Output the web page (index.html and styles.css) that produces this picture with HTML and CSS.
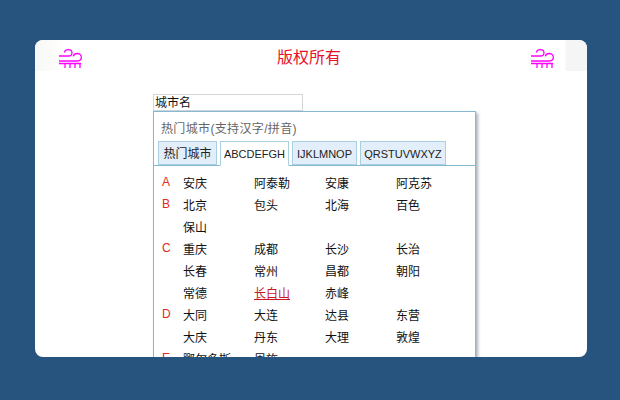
FILE: index.html
```html
<!DOCTYPE html>
<html lang="zh">
<head>
<meta charset="utf-8">
<title>版权所有</title>
<link rel="stylesheet" href="styles.css">
</head>
<body>
<main class="card">
  <header class="head">
    <svg class="wind" viewBox="0 0 24 20" aria-hidden="true"><path d="M1 8H10.500C12.600 8 14 6.800 14 5C14 3 12.500 1.600 10.300 1.600C8.300 1.600 6.700 2.800 6.200 4.500M1 13H19.500C21.800 13 23.300 11.500 23.300 9.300C23.300 7 21.500 5.500 19.300 5.500C17.500 5.500 15.800 6.500 15.300 8.300M1 15.500H23M7 16V20M12 16V20M17 16V20M22 16V20"/></svg>
    <h1 class="title">版权所有</h1>
    <svg class="wind" viewBox="0 0 24 20" aria-hidden="true"><path d="M1 8H10.500C12.600 8 14 6.800 14 5C14 3 12.500 1.600 10.300 1.600C8.300 1.600 6.700 2.800 6.200 4.500M1 13H19.500C21.800 13 23.300 11.500 23.300 9.300C23.300 7 21.500 5.500 19.300 5.500C17.500 5.500 15.800 6.500 15.300 8.300M1 15.500H23M7 16V20M12 16V20M17 16V20M22 16V20"/></svg>
  </header>
  <section class="picker">
    <input class="city-input" type="text" value="城市名" aria-label="城市名">
    <div class="popup">
      <p class="hint">热门城市(支持汉字/拼音)</p>
      <nav class="tabs">
        <span class="tab tab-hot">热门城市</span>
        <span class="tab tab-active">ABCDEFGH</span>
        <span class="tab tab-b">IJKLMNOP</span>
        <span class="tab tab-c">QRSTUVWXYZ</span>
      </nav>
      <div class="list">
        <div class="group"><b class="letter">A</b><ul class="cities"><li>安庆</li><li>阿泰勒</li><li>安康</li><li>阿克苏</li></ul></div>
        <div class="group"><b class="letter">B</b><ul class="cities"><li>北京</li><li>包头</li><li>北海</li><li>百色</li><li>保山</li></ul></div>
        <div class="group"><b class="letter">C</b><ul class="cities"><li>重庆</li><li>成都</li><li>长沙</li><li>长治</li><li>长春</li><li>常州</li><li>昌都</li><li>朝阳</li><li>常德</li><li class="current">长白山</li><li>赤峰</li></ul></div>
        <div class="group"><b class="letter">D</b><ul class="cities"><li>大同</li><li>大连</li><li>达县</li><li>东营</li><li>大庆</li><li>丹东</li><li>大理</li><li>敦煌</li></ul></div>
        <div class="group"><b class="letter">E</b><ul class="cities"><li>鄂尔多斯</li><li>恩施</li></ul></div>
      </div>
    </div>
  </section>
</main>
</body>
</html>
```
FILE: styles.css
```css
* { box-sizing: border-box; }
html, body { height: 100%; }
body {
  margin: 0;
  padding: 40px 33px 43px 35px;
  background: #27547f;
  font-family: "Liberation Sans", "Noto Sans CJK SC", sans-serif;
  font-size: 12px;
  overflow: hidden;
}
.card {
  height: 317px;
  background: #fff;
  border-radius: 8px;
  overflow: hidden;
}
.head {
  height: 54px;
  padding: 5px 33px 0 23px;
  display: flex;
  justify-content: space-between;
  align-items: flex-start;
  background: linear-gradient(90deg, #f7f7f5 0, #fff 30px, #fff 530px, #f5f5f5 531px);
  background-size: 100% 31px;
  background-repeat: no-repeat;
}
.wind {
  width: 24px;
  height: 20px;
  margin-top: 3px;
  fill: none;
  stroke: #f0f;
  stroke-width: 1.3;
}
.title {
  margin: 1px 0 0 6px;
  color: #e8102a;
  font-size: 16px;
  font-weight: 400;
  line-height: 24px;
}
.picker { margin-left: 118px; width: 323px; }
.city-input {
  display: block;
  width: 150px;
  height: 17px;
  padding: 0 1px 2px;
  border: 1px solid #d5d5d5;
  border-radius: 0;
  outline: 0;
  color: #111;
  font: 12px/14px "Liberation Sans", "Noto Sans CJK SC", sans-serif;
}
.popup {
  border: 1px solid #85b8d2;
  box-shadow: 2px 2px 3px #a9b4bd;
  background: #fff;
}
.hint {
  margin: 0;
  padding: 9px 0 0 7px;
  height: 29px;
  color: #666;
  font-size: 12px;
  line-height: 16px;
  letter-spacing: 0.35px;
}
.tabs {
  height: 25px;
  padding-left: 4px;
  display: flex;
  gap: 3px;
  border-bottom: 1px solid #85b8d2;
}
.tab {
  height: 24px;
  padding: 0;
  border: 1px solid #a9cfe0;
  background: #e2eefa;
  color: #222;
  font-size: 11px;
  line-height: 24px;
  text-align: center;
}
.tab-hot { width: 59px; font-size: 12px; }
.tab-active {
  width: 69px;
  height: 25px;
  background: #fff;
  border-bottom-color: #fff;
}
.tab-b { width: 65px; }
.tab-c { width: 86px; }
.list { padding-top: 7px; }
.group { display: flex; }
.letter {
  width: 29px;
  padding-left: 8px;
  color: #e02b20;
  font-weight: 400;
  line-height: 19px;
}
.cities {
  flex: 1;
  margin: 0;
  padding: 0;
  list-style: none;
  display: grid;
  grid-template-columns: repeat(4, 71px);
  grid-auto-rows: 22px;
}
.cities li { color: #111; line-height: 22px; }
.cities .current { color: #c8171d; text-decoration: underline; }
```
